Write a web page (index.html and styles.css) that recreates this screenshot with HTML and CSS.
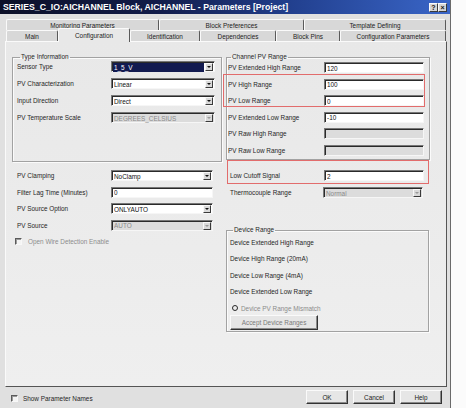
FILE: index.html
```html
<!DOCTYPE html>
<html>
<head>
<meta charset="utf-8">
<title>Parameters</title>
<link rel="stylesheet" href="styles.css">
</head>
<body>
<div class="window">
  <div class="titlebar">
    <span class="title">SERIES_C_IO:AICHANNEL Block, AICHANNEL - Parameters [Project]</span>
    <div class="tb-btns"><span class="tb-btn">?</span><span class="tb-btn">&#215;</span></div>
  </div>
  <div class="tabs">
    <div class="tabrow">
      <div class="tab w-mon">Monitoring Parameters</div>
      <div class="tab w-bpref">Block Preferences</div>
      <div class="tab w-tmpl">Template Defining</div>
    </div>
    <div class="tabrow">
      <div class="tab w-main">Main</div>
      <div class="tab w-conf active">Configuration</div>
      <div class="tab w-ident">Identification</div>
      <div class="tab w-dep">Dependencies</div>
      <div class="tab w-pins">Block Pins</div>
      <div class="tab w-cparm">Configuration Parameters</div>
    </div>
  </div>
  <div class="panel">
    <div class="col col-left">
      <fieldset class="grp g-type">
        <legend>Type Information</legend>
        <div class="row"><span class="lbl">Sensor Type</span><div class="ctl combo focus"><span class="val">1_5_V</span><span class="arrow"></span></div></div>
        <div class="row"><span class="lbl">PV Characterization</span><div class="ctl combo"><span class="val">Linear</span><span class="arrow"></span></div></div>
        <div class="row"><span class="lbl">Input Direction</span><div class="ctl combo"><span class="val">Direct</span><span class="arrow"></span></div></div>
        <div class="row"><span class="lbl">PV Temperature Scale</span><div class="ctl combo disabled"><span class="val">DEGREES_CELSIUS</span><span class="arrow"></span></div></div>
      </fieldset>
      <div class="lower">
        <div class="row"><span class="lbl">PV Clamping</span><div class="ctl combo"><span class="val">NoClamp</span><span class="arrow"></span></div></div>
        <div class="row"><span class="lbl">Filter Lag Time (Minutes)</span><div class="ctl input"><span class="val">0</span></div></div>
        <div class="row"><span class="lbl">PV Source Option</span><div class="ctl combo"><span class="val">ONLYAUTO</span><span class="arrow"></span></div></div>
        <div class="row"><span class="lbl">PV Source</span><div class="ctl combo disabled"><span class="val">AUTO</span><span class="arrow"></span></div></div>
        <div class="row chkrow"><span class="cbox"></span><span class="dis-text">Open Wire Detection Enable</span></div>
      </div>
    </div>
    <div class="col col-right">
      <fieldset class="grp g-chan">
        <legend>Channel PV Range</legend>
        <div class="row"><span class="lbl">PV Extended High Range</span><div class="ctl input"><span class="val">120</span></div></div>
        <div class="hl-pair">
          <div class="row"><span class="lbl">PV High Range</span><div class="ctl input"><span class="val">100</span></div></div>
          <div class="row"><span class="lbl">PV Low Range</span><div class="ctl input"><span class="val">0</span></div></div>
        </div>
        <div class="row"><span class="lbl">PV Extended Low Range</span><div class="ctl input"><span class="val">-10</span></div></div>
        <div class="row"><span class="lbl">PV Raw High Range</span><div class="ctl input disabled"></div></div>
        <div class="row"><span class="lbl">PV Raw Low Range</span><div class="ctl input disabled"></div></div>
      </fieldset>
      <div class="hl-box">
        <div class="row"><span class="lbl">Low Cutoff Signal</span><div class="ctl input"><span class="val">2</span></div></div>
      </div>
      <div class="row thermo"><span class="lbl">Thermocouple Range</span><div class="ctl combo disabled"><span class="val">Normal</span><span class="arrow"></span></div></div>
      <fieldset class="grp g-dev">
        <legend>Device Range</legend>
        <div class="row"><span class="lbl">Device Extended High Range</span></div>
        <div class="row"><span class="lbl">Device High Range (20mA)</span></div>
        <div class="row"><span class="lbl">Device Low Range (4mA)</span></div>
        <div class="row"><span class="lbl">Device Extended Low Range</span></div>
        <div class="row radiorow"><span class="radio"></span><span class="dis-text">Device PV Range Mismatch</span></div>
        <div class="btn accept">Accept Device Ranges</div>
      </fieldset>
    </div>
  </div>
  <div class="bottombar">
    <div class="showpn"><span class="cbox"></span><span>Show Parameter Names</span></div>
    <div class="btns">
      <div class="btn dlg">OK</div>
      <div class="btn dlg">Cancel</div>
      <div class="btn dlg">Help</div>
    </div>
  </div>
</div>
</body>
</html>
```

FILE: styles.css
```css
* { box-sizing: border-box; }
html, body { margin: 0; padding: 0; }
body {
  width: 466px;
  height: 408px;
  overflow: hidden;
  background: #fbfbfb;
  font-family: "Liberation Sans", Arial, sans-serif;
  font-size: 6.4px;
  color: #262626;
}
.window {
  width: 451px;
  height: 408px;
  background: #e0e0e0;
  border-right: 1px solid #6a6a6a;
  display: flex;
  flex-direction: column;
}
.titlebar {
  height: 14px;
  flex: none;
  background: linear-gradient(90deg, #0c1028 0%, #121c4a 35%, #22408f 65%, #3a66c8 100%);
  display: flex;
  align-items: center;
  justify-content: space-between;
  padding: 0 3px 0 3px;
}
.title {
  color: #fff;
  font-weight: bold;
  font-size: 8.7px;
  white-space: nowrap;
}
.tb-btns { display: flex; gap: 0; }
.tb-btn {
  width: 9px;
  height: 9px;
  background: #d6d6d6;
  border: 1px solid;
  border-color: #fafafa #3a3a3a #3a3a3a #fafafa;
  font-size: 7px;
  font-weight: bold;
  line-height: 7px;
  text-align: center;
  color: #111;
}

/* tabs */
.tabs { margin: 5px 0 0 6px; flex: none; }
.tabrow { display: flex; height: 11px; }
.tab {
  height: 11px;
  background: #d8d8d8;
  border: 1px solid;
  border-color: #fafafa #5a5a5a transparent #fafafa;
  border-bottom: none;
  border-radius: 2px 2px 0 0;
  display: flex;
  align-items: center;
  justify-content: center;
  white-space: nowrap;
  color: #222;
}
.tab.active {
  background: #e8e8e8;
  height: 14px;
  margin-top: -2px;
  position: relative;
  z-index: 2;
}
.w-mon { width: 153px; }
.w-bpref { width: 145px; }
.w-tmpl { width: 142px; }
.w-main { width: 52px; }
.w-conf { width: 72px; }
.w-ident { width: 70px; }
.w-dep { width: 76px; }
.w-pins { width: 64px; }
.w-cparm { width: 106px; }

/* panel */
.panel {
  margin-left: 5px;
  width: 442px;
  height: 346px;
  flex: none;
  background: linear-gradient(180deg, #e8e8e8 0%, #ececec 60%, #efefef 100%);
  border: 1px solid;
  border-color: #fafafa #555 #555 #fafafa;
  display: flex;
  gap: 4px;
  padding: 11px 0 0 6px;
}
.col { display: flex; flex-direction: column; }
.col-left { width: 210px; }
.col-right { width: 204px; }

fieldset.grp {
  margin: 0;
  min-width: 0;
  border: 1px solid #a2a2a2;
  box-shadow: 1px 1px 0 #fbfbfb, inset 1px 1px 0 #fbfbfb;
}
legend {
  padding: 0 1px;
  margin-left: 3px;
  line-height: 8px;
  font-size: 6.4px;
  color: #262626;
}
fieldset.g-type { height: 109px; padding: 0 0 0 4px; }
fieldset.g-chan { height: 107px; padding: 1px 0 0 1px; }
fieldset.g-dev { height: 106px; margin-top: 22.5px; padding: 2.5px 0 0 3px; width: 203px; }

.row {
  display: flex;
  align-items: center;
  height: 11px;
  margin-bottom: 5.5px;
  white-space: nowrap;
}
.g-type .row { margin-bottom: 6px; }
.lbl { flex: none; }
.col-left .lbl { width: 94px; }
.col-right .lbl { width: 96px; }
.hl-box .lbl { width: 94px; }
.thermo .lbl { width: 93px; }

.lower { margin-top: 8px; padding-left: 5px; }
.lower .lbl { width: 94px; }

/* controls */
.ctl {
  height: 11px;
  background: #fff;
  border: 1px solid;
  border-color: #777 #f6f6f6 #f6f6f6 #777;
  box-shadow: inset 1px 1px 0 #2a2a2a;
  display: flex;
  align-items: center;
  padding: 1px 1px 0 2px;
  color: #111;
}
.col-left .ctl { width: 104px; }
.lower .ctl { width: 102px; }
.col-right .ctl { width: 100px; }
.ctl .val { flex: 1; overflow: hidden; line-height: 9px; height: 9px; }
.arrow {
  flex: none;
  width: 8px;
  height: 8px;
  background: #d9d9d9;
  border: 1px solid;
  border-color: #f8f8f8 #3a3a3a #3a3a3a #f8f8f8;
  display: flex;
  align-items: center;
  justify-content: center;
}
.arrow::before {
  content: "";
  border-left: 2px solid transparent;
  border-right: 2px solid transparent;
  border-top: 2.5px solid #111;
}
.combo.focus { padding-left: 1px; }
.combo.focus .val {
  background: #121a50;
  color: #fff;
  padding-left: 1px;
  margin-right: 1px;
}
.combo.disabled, .input.disabled { background: #dcdcdc; }
.combo.disabled .val { color: #8a8a8a; }
.combo.disabled .arrow::before { border-top-color: #9a9a9a; }

/* highlights */
.hl-pair { position: relative; }
.hl-pair::after {
  content: "";
  position: absolute;
  top: -5px;
  bottom: -1px;
  left: -5px;
  right: 4px;
  border: 1px solid #e26c6c;
  pointer-events: none;
}
.hl-box {
  margin-left: 1px;
  width: 202px;
  height: 24px;
  border: 1px solid #e26c6c;
  padding: 9px 0 0 2px;
  flex: none;
}
.thermo { margin-top: 3px; padding-left: 4px; }

/* checkbox / radio */
.cbox {
  flex: none;
  width: 7px;
  height: 7px;
  background: #f4f4f4;
  border: 1px solid;
  border-color: #5a5a5a #f8f8f8 #f8f8f8 #5a5a5a;
  box-shadow: inset 1px 1px 0 #9a9a9a;
}
.chkrow { margin-top: 0; margin-left: -2px; }
.chkrow .cbox { margin-right: 6px; }
.dis-text { color: #8c8c8c; }
.radio {
  flex: none;
  width: 6px;
  height: 6px;
  border-radius: 50%;
  border: 1px solid #2a2a2a;
  background: #eee;
  margin: 0 3px 0 2px;
}
.radiorow { margin-bottom: 1.5px; }

.btn {
  display: flex;
  align-items: center;
  justify-content: center;
  background: #e6e6e6;
  border: 1px solid;
  border-color: #fafafa #333 #333 #fafafa;
  box-shadow: inset -1px -1px 0 #8a8a8a;
  white-space: nowrap;
  color: #222;
}
.accept { width: 88px; height: 15px; color: #7a7a7a; }

/* bottom bar */
.bottombar {
  flex: 1;
  display: flex;
  align-items: flex-start;
  justify-content: space-between;
  padding: 3px 8px 0 11px;
}
.showpn {
  display: flex;
  align-items: center;
  gap: 5px;
  margin-top: 5px;
  color: #262626;
}
.btns { display: flex; gap: 5px; }
.btn.dlg { width: 42px; height: 14px; }
```
